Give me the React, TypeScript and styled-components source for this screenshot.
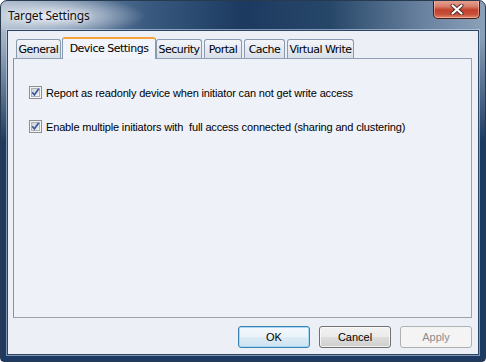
import React from "react";
import styled, { createGlobalStyle, css } from "styled-components";

const GlobalStyle = createGlobalStyle`
  html, body {
    margin: 0;
    padding: 0;
    background: #ffffff;
  }
  * {
    box-sizing: border-box;
  }
`;

const Window = styled.div`
  width: 486px;
  height: 362px;
  display: flex;
  flex-direction: column;
  border: 1px solid #283a50;
  border-radius: 7px 7px 4px 4px;
  overflow: hidden;
  background:
    radial-gradient(ellipse 95px 20px at 50px 15px, rgba(236, 241, 247, 0.95), rgba(236, 241, 247, 0) 100%),
    linear-gradient(180deg, rgba(29, 59, 98, 0) 0px, rgba(29, 59, 98, 0) 36px, #1d3b62 140px),
    linear-gradient(90deg, #a6b5c7 0%, #8197b1 10%, #3a5a80 30%, #1c3a60 50%, #274769 68%, #6b84a1 88%, #8ca1b9 100%);
`;

const TitleBar = styled.div`
  height: 29px;
  display: flex;
  justify-content: space-between;
  align-items: flex-start;
  flex-shrink: 0;
`;

const Title = styled.span`
  padding: 6px 0 0 7px;
  font-family: "Noto Sans", "Open Sans", sans-serif;
  font-size: 12px;
  letter-spacing: -0.2px;
  color: #111;
  text-shadow: 0 0 6px rgba(255, 255, 255, 0.9);
`;

const CloseButton = styled.div`
  width: 47px;
  height: 19px;
  margin: -1px 5px 0 0;
  display: flex;
  align-items: center;
  justify-content: center;
  border: 1px solid #4a1d14;
  border-top: none;
  border-radius: 0 0 5px 5px;
  background: linear-gradient(180deg, #e7a596 0%, #d8806d 35%, #c2412b 55%, #c8503a 80%, #e08b6e 100%);
  box-shadow: inset 0 0 0 1px rgba(255, 220, 210, 0.45);
`;

const Client = styled.div`
  flex: 1;
  margin: 0 6px 6px 6px;
  display: flex;
  flex-direction: column;
  padding: 6px 6px 6px 5px;
  border: 1px solid #2b4668;
  background: #eceff6;
  box-shadow: 0 0 0 1px rgba(210, 222, 236, 0.55);
`;

const TabRow = styled.div`
  height: 21px;
  display: flex;
  align-items: flex-end;
  gap: 2px;
  padding-left: 3px;
  position: relative;
  z-index: 1;
`;

const Tab = styled.div<{ $w: number; $active?: boolean }>`
  width: ${(p) => p.$w}px;
  height: 19px;
  display: flex;
  align-items: center;
  justify-content: center;
  font-family: "DejaVu Sans", sans-serif;
  font-size: 11px;
  letter-spacing: -0.5px;
  color: #000;
  white-space: nowrap;
  border: 1px solid #8a9ab0;
  border-bottom: none;
  border-radius: 3px 3px 0 0;
  background: linear-gradient(180deg, #f3f5f9 0%, #e6eaf1 50%, #d9e0ea 100%);
  ${(p) =>
    p.$active &&
    css`
      height: 22px;
      margin: 0 -2px -1px -1px;
      padding-bottom: 2px;
      border-top: 2px solid #f3a23f;
      border-radius: 3px 3px 0 0;
      background: #f1f4fa;
    `}
`;

const Panel = styled.div`
  flex: 1;
  display: flex;
  flex-direction: column;
  gap: 21px;
  padding: 27px 0 0 15px;
  border: 1px solid #9aa3ae;
  border-left-color: #7d95b5;
  border-top-color: #8fa0b6;
  background: #eef1f8;
`;

const CheckRow = styled.label`
  display: flex;
  align-items: center;
  gap: 4px;
  height: 13px;
  font-family: "Liberation Sans", Arial, sans-serif;
  font-size: 11px;
  letter-spacing: -0.15px;
  color: #000;
  white-space: pre;
`;

const ButtonRow = styled.div`
  display: flex;
  justify-content: flex-end;
  gap: 9px;
  margin-top: 8px;
`;

const Button = styled.div<{ $variant?: "default" | "disabled" }>`
  width: 72px;
  height: 22px;
  display: flex;
  align-items: center;
  justify-content: center;
  font-family: "Liberation Sans", Arial, sans-serif;
  font-size: 11px;
  color: #000;
  border: 1px solid #707070;
  border-radius: 3px;
  background: linear-gradient(180deg, #f2f2f2 0%, #ebebeb 48%, #dddddd 52%, #cfcfcf 100%);
  box-shadow: inset 0 0 0 1px rgba(255, 255, 255, 0.7);
  ${(p) =>
    p.$variant === "default" &&
    css`
      border-color: #3c7fb1;
      background: linear-gradient(180deg, #f4f9fc 0%, #eaf3f9 48%, #dcebf5 52%, #cfe3f1 100%);
      box-shadow: inset 0 0 0 1px #a7d8f5;
    `}
  ${(p) =>
    p.$variant === "disabled" &&
    css`
      color: #8d8d8d;
      border-color: #adb2b5;
      background: #f4f4f4;
      box-shadow: none;
    `}
`;

const CloseGlyph = () => (
  <svg width="14" height="11" viewBox="0 0 14 11">
    <path d="M2.5 1.5 L11.5 9.5 M11.5 1.5 L2.5 9.5" stroke="#4b2a25" strokeWidth="4" strokeLinecap="round" />
    <path d="M2.5 1.5 L11.5 9.5 M11.5 1.5 L2.5 9.5" stroke="#ffffff" strokeWidth="2.2" strokeLinecap="round" />
  </svg>
);

const CheckBox = () => (
  <svg width="13" height="13" viewBox="0 0 13 13">
    <defs>
      <linearGradient id="cbfill" x1="0" y1="0" x2="1" y2="1">
        <stop offset="0" stopColor="#cbcfd5" />
        <stop offset="1" stopColor="#f6f6f6" />
      </linearGradient>
    </defs>
    <rect x="0.5" y="0.5" width="12" height="12" fill="#f4f4f4" stroke="#8e8f8f" />
    <rect x="2.5" y="2.5" width="8" height="8" fill="url(#cbfill)" stroke="#aeb3b9" />
    <path d="M3.2 6.3 L5.4 8.8 L9.8 2.8" fill="none" stroke="#3d5b9a" strokeWidth="1.7" />
  </svg>
);

const tabs = [
  { label: "General", w: 45 },
  { label: "Device Settings", w: 94, active: true },
  { label: "Security", w: 46 },
  { label: "Portal", w: 38 },
  { label: "Cache", w: 41 },
  { label: "Virtual Write", w: 67 },
];

const App = () => {
  return (
    <>
      <GlobalStyle />
      <Window>
        <TitleBar>
          <Title>Target Settings</Title>
          <CloseButton>
            <CloseGlyph />
          </CloseButton>
        </TitleBar>
        <Client>
          <TabRow>
            {tabs.map((t) => (
              <Tab key={t.label} $w={t.w} $active={t.active}>
                {t.label}
              </Tab>
            ))}
          </TabRow>
          <Panel>
            <CheckRow>
              <CheckBox />
              Report as readonly device when initiator can not get write access
            </CheckRow>
            <CheckRow>
              <CheckBox />
              {"Enable multiple initiators with  full access connected (sharing and clustering)"}
            </CheckRow>
          </Panel>
          <ButtonRow>
            <Button $variant="default">OK</Button>
            <Button>Cancel</Button>
            <Button $variant="disabled">Apply</Button>
          </ButtonRow>
        </Client>
      </Window>
    </>
  );
};

export default App;
